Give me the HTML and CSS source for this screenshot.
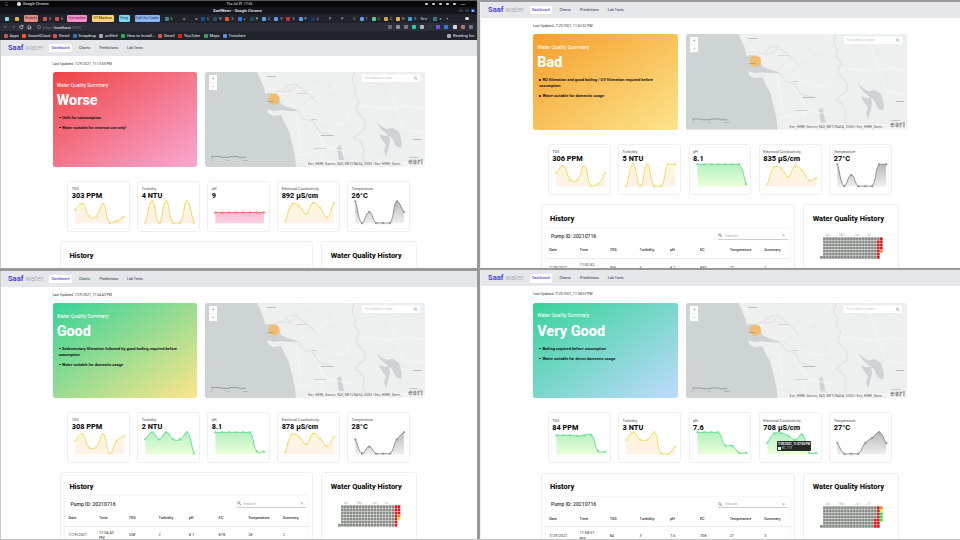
FILE: index.html
```
<!DOCTYPE html>
<html lang="en">
<head>
<meta charset="utf-8">
<title>Saaf water</title>
<link rel="stylesheet" href="styles.css">
</head>
<body>
<main class="wall">
  <section class="pane left first">
    <div class="chrome">
      <div class="sysbar"><span class="grid-dots">⠿</span><i class="dot white"></i><span class="app-name">Google Chrome</span><span class="clock">Thu Jul 29 &nbsp;17:55</span><span class="tray"><i></i><i></i><i></i><i></i><i></i><b>100%</b></span></div>
      <div class="titlebar"><span>SaafWater - Google Chrome</span><div class="winbtns"><i></i><i></i><i class="close">×</i></div></div>
      <div class="tabs" id="tabs"></div>
      <div class="toolbar">
        <svg class="nav-icons" viewBox="0 0 36 8"><g fill="none" stroke="#666b76" stroke-width=".6"><path d="M7.500 4H4M5.500 2.500 4 4l1.500 1.500M11.500 4H15M13.500 2.500 15 4l-1.500 1.500"/><path stroke="#d5d7dc" stroke-width=".8" d="M22.700 3A1.600 1.600 0 1 0 23 4.300M23 2v1.300h-1.300M27.300 4.200l2-1.900 2 1.900M28 3.800v2h2.600v-2"/></g></svg>
        <span class="url"><i></i>http://<b>localhost</b>:3000</span>
        <span class="tools" id="tools"></span>
      </div>
      <div class="bookmarks" id="bookmarks"></div>
    </div>
    <div class="app" data-panel="worse"></div>
  </section>
  <section class="pane right top"><div class="app" data-panel="bad"></div></section>
  <section class="pane left second"><div class="app" data-panel="good"></div></section>
  <section class="pane right"><div class="app" data-panel="great"></div></section>
</main>
<script src="app.js"></script>
</body>
</html>
```
FILE: styles.css
```
* { box-sizing: border-box; }
body { margin: 0; width: 960px; height: 540px; overflow: hidden; background: #999; font-family: Roboto, "Liberation Sans", sans-serif; font-size: 3.6px; color: #111; }
i { font-style: normal; }
svg { display: block; }
.wall { display: grid; grid-template-columns: 476.6px 480px; grid-template-rows: 267.7px 268.6px; column-gap: 3.4px; row-gap: 2.7px; height: 539px; background: #999; box-shadow: 0 1px #c6c6c6; }
.pane { overflow: hidden; background: #fff; min-width: 0; }
.left { border-left: 1px solid #c9c9cb; }
.left.first { border-left: 0; }
.left.first .app { border-left: 1px solid #c9c9cb; }
.second { margin-top: .6px; }
.right { border-left: 1px solid #eeeef0; }
.right.top { margin-top: 2px; }
.right .app { zoom: 1.0055; }

.chrome { height: 40px; background: #20222c; color: #c8cbd2; }
.sysbar { height: 7px; background: #08080a; display: flex; align-items: center; font-size: 3.7px; font-weight: 500; border-top: 1px solid #555; }
.grid-dots { margin-left: 4.5px; width: 12.5px; font-size: 4px; }
.dot { width: 3.6px; height: 3.6px; border-radius: 50%; flex: none; }
.dot.white { background: #ddd; }
.app-name { margin-left: 2.5px; width: 203.5px; }
.clock { width: 198px; font-size: 3.3px; white-space: nowrap; }
.tray { display: flex; align-items: center; gap: 4px; }
.tray i { width: 3px; height: 2.5px; background: #d5d5d5; border-radius: 1px; }
.tray b { font-size: 2.5px; font-weight: 400; }
.titlebar { height: 7px; background: #15161d; display: flex; align-items: center; font-size: 3.9px; font-weight: 700; color: #dadce0; }
.titlebar > span { margin-left: 213px; width: 246px; white-space: nowrap; }
.winbtns { display: flex; gap: 2.4px; }
.winbtns i { width: 3.6px; height: 3.6px; border-radius: 50%; background: #343743; }
.winbtns .close { color: #fff; background: #1668e8; font-size: 4px; line-height: 3.6px; text-align: center; }
.tabs { height: 9px; padding-left: 5px; display: flex; align-items: center; background: #20222c; }
.tab { flex: none; display: flex; align-items: center; gap: 2px; font-size: 3.4px; white-space: nowrap; overflow: hidden; }
.tab .fav { width: 4px; height: 4px; border-radius: 1px; flex: none; }
.group { flex: none; height: 6.4px; border-radius: 1.2px; margin-right: 5px; color: #33333c; font-size: 4px; line-height: 6.2px; text-align: center; white-space: nowrap; }
.toolbar { height: 8px; background: #2b2d38; display: flex; align-items: center; font-size: 4.1px; }
.nav-icons { width: 36px; height: 8px; }
.url { width: 110px; color: #737781; display: flex; align-items: center; white-space: nowrap; }
.url b { color: #d3d5da; font-weight: 500; }
.url i { width: 3.6px; height: 3.6px; border: .5px solid #747984; border-radius: 50%; margin: 0 2px 0 1.3px; }
.tools { display: flex; align-items: center; gap: 4.15px; }
.toolbar .tools { margin-left: 241.5px; }
.tools i { width: 4px; height: 4px; border-radius: 1px; flex: none; }
.bookmarks { height: 9px; background: #20222c; display: flex; align-items: center; padding-left: 3.5px; font-size: 4.1px; font-weight: 500; }
.bm { display: flex; flex: none; align-items: center; gap: 2px; white-space: nowrap; }
.bm i { width: 4px; height: 4px; border-radius: 1px; flex: none; }

.topnav { height: 16px; background: #e5e7eb; display: flex; align-items: center; padding-left: 7px; }
.right .topnav { margin-left: -1px; padding-left: 8px; }
.logo { width: 41.3px; font-size: 7.5px; line-height: 8px; color: #9a9ca4; font-weight: 300; white-space: nowrap; }
.logo b { color: #4a43dc; font-weight: 700; }
.topnav a { font-size: 3.7px; font-weight: 500; color: #535b68; white-space: nowrap; }
.topnav .on { width: 22.6px; height: 8.6px; border-radius: 1px; background: #fff; color: #5b54e6; text-align: center; line-height: 8.6px; margin-right: 7.2px; margin-top: -.2px; }
.topnav .n1 { width: 20.4px; }
.topnav .n2 { width: 27.5px; }
.content { padding-left: 51.5px; width: 423.5px; }
.right .content { padding-left: 51.7px; width: 423.7px; }
.updated { height: 16px; padding-top: 5.9px; font-size: 3.45px; line-height: 4.5px; color: #333; white-space: nowrap; }
.hero { display: flex; gap: 8px; height: 95px; }
.summary { width: 144px; height: 95px; border-radius: 2.5px; padding: 9.6px 4.2px; color: #fff; }
.summary.worse { background: linear-gradient(to bottom right, #ef4444, #f9a8d4); }
.summary.bad { background: linear-gradient(to bottom right, #f59e2b, #fde58c); }
.summary.good { background: linear-gradient(to bottom right, #36d399, #fde68a); }
.summary.great { background: linear-gradient(to bottom right, #36d399, #bfdbfe); }
.summary p { margin: 0; font-size: 4.95px; line-height: 6px; }
.summary h1 { margin: 5.3px 0 6px; font-size: 14.4px; line-height: 16px; height: 16px; font-weight: 800; }
.summary ul { margin: 0 0 0 2px; padding: 0; list-style: none; width: 126px; color: #151515; font-weight: 700; font-size: 3.98px; line-height: 6px; }
.summary li { margin-bottom: 4px; }
.summary li i { display: inline-block; width: 1.6px; height: 1.6px; margin: 0 1.4px .5px .3px; border-radius: 50%; background: #151515; }
.map { width: 220px; height: 95px; border-radius: 2.5px; overflow: hidden; }
.map text { font-family: Roboto, sans-serif; }
.stats { display: flex; justify-content: center; gap: 7.7px; margin-top: 14.2px; }
.stat { position: relative; flex: none; width: 62.3px; height: 50.5px; border: 1px solid #f0f0f2; border-radius: 2.5px; padding: 4.2px 0 0 3.3px; white-space: nowrap; }
.stat span { display: block; font-size: 3.8px; line-height: 5px; color: #4a5361; }
.stat strong { display: block; font-size: 7.35px; line-height: 9px; height: 7.8px; font-weight: 800; color: #0c0c0c; }
.stat svg { width: 62.3px; height: 26px; margin-left: -4.3px; }
.tip { position: absolute; left: 16.5px; top: 27.3px; width: 34.3px; height: 10.5px; border-radius: 1px; background: #262a26; color: #fff; padding: 1.3px; font-size: 2.9px; line-height: 4px; }
.tip b { display: block; }
.tip em { display: flex; align-items: center; gap: 1px; font-style: normal; color: #ddd; }
.tip em i { width: 3px; height: 3px; background: #d9ffe6; }
.lower { display: flex; justify-content: center; gap: 8px; margin-top: 9.7px; }
.history, .quality { height: 90px; border: 1px solid #f0f0f2; border-radius: 2.5px; flex: none; }
.history { width: 252.7px; padding: 8.4px 3px 0; }
.quality { width: 95.5px; padding: 8.4px 0 0 8.7px; }
h2 { margin: 0; font-size: 7.4px; line-height: 9px; font-weight: 800; color: #0c0c0c; white-space: nowrap; }
.history h2 { margin-left: 5px; }
.quality h2 { font-size: 7.4px; }
.table { margin-top: 4.3px; border: 1px solid #f7f7f8; height: 60px; }
.bar { height: 15.4px; padding: 0 2px 0 5px; display: flex; justify-content: space-between; align-items: center; font-size: 5.1px; font-weight: 500; color: #333; }
.search { width: 69.5px; height: 8px; border-bottom: 1px solid #cfcfcf; display: flex; align-items: center; gap: 2.5px; color: #aaa; font-size: 4px; font-weight: 400; }
.search svg { width: 4.5px; height: 4.5px; }
.search .x { margin-left: auto; margin-right: 3px; font-size: 5px; }
.row { display: grid; grid-template-columns: 30.3px 29.9px 29.8px 30.2px 29.8px 29.6px 34.5px 28px; padding-left: 3.2px; align-items: center; height: 14.5px; font-size: 3.85px; line-height: 5px; color: #333; }
.row.head { font-weight: 500; border-bottom: 1px solid #ececee; font-size: 3.75px; height: 15.3px; }
.row.data { height: 16px; }
.time { width: 18px; }
.quality svg { width: 72px; height: 30px; margin-top: 10.3px; }
```
FILE: app.js
```
const palettes = {
  y: ['#ecd65a', '#fff8d9', '#fff1e8'],
  g: ['#5bd98b', '#b5f0c3', '#eaffd9'],
  r: ['#ff5b66', '#fda4bd', '#fbd0e3'],
  k: ['#858585', '#b9b9b9', '#eeeeee']
};
const names = ['TDS', 'Turbidity', 'pH', 'Electrical Conductivity', 'Temperature'];
const panels = {
  worse: {
    updated: '7/29/2021, 11:13:55 PM', title: 'Worse', notes: ['Unfit for consumption', 'Water suitable for external use only!'],
    values: ['303 PPM', '4 NTU', '9', '892 µS/cm', '26°C'], colors: 'yyryk',
    series: [[29,22.7,35.3,35.7,22.7,42,40,35.7],[42,20.3,42,20.3,42,42,20.3,42],[31.5,31.5,31.5,31.5,31.5,31.5,31.5,31.5],[40.7,23,25,32.7,22,26.7,36.3,22],[20.3,42,31,42,42,42,20.3,31]]
  },
  bad: {
    updated: '7/29/2021, 11:52:52 PM', title: 'Bad', notes: ['RO filteration and good boiling / UV filteration required before cosumption', 'Water suitable for domestic usage'],
    values: ['306 PPM', '5 NTU', '8.1', '835 µS/cm', '27°C'], colors: 'yygyk',
    series: [[28.7,22,35.7,36,22,42,39.7,28.7],[42,20.3,42,20.3,42,42,20.3,20.3],[20.3,20.3,20.3,20.3,20.3,20.3,20.3,40],[40.3,23,24.7,32.7,22,26.7,36.3,34.3],[20.3,42,31,42,42,42,20.3,20.3]],
    row: ['7/29/2021', '11:52:52 PM', '306', '5', '8.1', '835', '27', '1'],
    heat: { 19: 'grrrrrr', 20: 'rrrro  ' }
  },
  good: {
    updated: '7/29/2021, 11:54:43 PM', title: 'Good', notes: ['Sedementary filteration followed by good boiling required before cosumption', 'Water suitable for domestic usage'],
    values: ['308 PPM', '2 NTU', '8.1', '878 µS/cm', '28°C'], colors: 'yggyk',
    series: [[28.7,22.3,35.3,35.3,22.3,41.5,28.7,24.3],[27.3,20.3,27.3,20.3,27.3,27.3,20.3,41.5],[20.3,20.3,20.3,20.3,20.3,20.3,39.5,39.7],[40,22.3,24.7,32.3,21.7,26.7,34.3,24.7],[27.5,41.5,34.7,41.7,41.7,41.7,27.3,20.3]],
    row: ['7/29/2021', '11:54:43 PM', '308', '2', '8.1', '878', '28', '2'],
    heat: { 19: 'rrrrrrr', 20: 'rrroy  ' }
  },
  great: {
    updated: '7/29/2021, 11:58:57 PM', title: 'Very Good', notes: ['Boiling required before cosumption', 'Water suitable for direct domestic usage'],
    values: ['84 PPM', '3 NTU', '7.6', '708 µS/cm', '27°C'], colors: 'gyggk', tip: true,
    series: [[23.3,23.3,23.3,24,23.3,23,39,39.7],[27.7,20.3,27.7,27.7,20.3,41.7,41.7,34.7],[20.3,20.3,20.3,20.3,33.3,33.7,40.7,40.7],[30.7,21.3,21.3,23.7,28,22.3,41,41],[31,41.7,41.7,41.7,31,25.7,20.3,31]],
    row: ['7/29/2021', '11:58:57 PM', '84', '3', '7.6', '708', '27', '3'],
    heat: { 18: 'ggggrrr', 19: 'rrrrrrr', 20: 'oyGGG  ' }
  }
};

// Cardinal spline through the points, control points kept inside the plot area.
function chart(ys, color, id) {
  const [line, top, bottom] = palettes[color];
  const pts = ys.map((y, i) => [8.3 + i * 6.94, y]);
  const clamp = v => Math.max(20.3, Math.min(42, v));
  const ctl = pts.map((p, i) => {
    const a = pts[i - 1] || p, b = pts[i + 1] || p;
    const d1 = Math.hypot(p[0] - a[0], p[1] - a[1]), d2 = Math.hypot(b[0] - p[0], b[1] - p[1]);
    const f1 = .5 * d1 / (d1 + d2), f2 = .5 * d2 / (d1 + d2);
    return [[p[0] - f1 * (b[0] - a[0]), clamp(p[1] - f1 * (b[1] - a[1]))], [p[0] + f2 * (b[0] - a[0]), clamp(p[1] + f2 * (b[1] - a[1]))]];
  });
  let d = `M${pts[0]}`;
  for (let i = 1; i < 8; i++) d += `C${ctl[i - 1][1]} ${ctl[i][0]} ${pts[i]}`;
  return `<svg viewBox="0 18 62.3 26"><defs><linearGradient id="${id}" x1="0" y1="20" x2="0" y2="42" gradientUnits="userSpaceOnUse"><stop stop-color="${top}"/><stop offset="1" stop-color="${bottom}"/></linearGradient></defs>
    <path d="${d}V42.300H8.300Z" fill="url(#${id})"/><path d="${d}" fill="none" stroke="${line}" stroke-width=".9"/>
    ${pts.map(p => `<circle cx="${p[0]}" cy="${p[1]}" r=".85" fill="${top}" stroke="${line}" stroke-width=".65"/>`).join('')}</svg>`;
}

const map = `<svg class="map" viewBox="0 0 220 95">
  <rect width="220" height="95" fill="#eeefef"/>
  <path fill="#ced3d4" d="M0 0H52.700L55 6 57 11 59 16 60 22 64 21 71 22 74 27 76 32 82 35 93 38 92 39 84 39 76 38 69 39 62 37 63 41 68 44 76 43 80 52 84 59 87 71 90 84 91 95H0Z"/>
  <path fill="#ced3d4" d="M171 50 176 54 181 57 188 56 194 60 197 70 196 76 191 74 187 66 182 62 176 57ZM174 62 180 64 184 63 185 70 183 78 181 85 179 79 181 73 177 68ZM132 75 136 73 137 80 139 88 134 88Z"/>
  <g fill="none" stroke="#f8f8f8" stroke-width=".8"><path d="M52 1 62 9 70 18 80 26 89 35 101 46 113 60 118 71 116 95M93 37 104 31 116 24 133 12 146 0M104 39 116 48 130 52 143 50 144 42 150 37 160 34 184 37 202 34 220 37M180 0 188 25 195 45 198 57 213 60 220 58M91 42 94 60 96 78M118 71 128 77 147 81M90 84 108 80 125 76"/></g>
  <g fill="none" stroke="#d6d9da" stroke-width=".7"><path d="M71 20 77 19 84 13 91 12 98 18 107 25 111 31M78 20 86 19 92 13M93 38 99 47 109 50 113 59 126 63M149 0 147 10 151 16 149 22 154 29 151 38 155 43 160 49 160 57 153 62 149 66 155 69 159 76 158 85 162 94"/></g>
  <g fill="none" stroke="#e6e8e8" stroke-width=".5"><path d="M94 0 102 8 116 10 128 17M103 39 118 30 131 21 147 20M164 94 174 80 191 85 202 94M163 10 180 13 202 8 218 16"/></g>
  <circle cx="69" cy="27" r="5.700" fill="#f7ba67" fill-opacity=".92"/>
  <g fill="#777" font-size="2.500"><text x="62" y="5">Mapusa</text><text x="62" y="30">Panaji</text><text x="116" y="64">Sanvordem</text><text x="208.500" y="67.500">Dandeli</text><g fill="#b0b0b0"><text x="106" y="47.500">GOA</text><text x="92" y="22">Bicholim</text><text x="109" y="77">SANGUEM</text></g></g>
  <rect x="4" y="3" width="8" height="15" fill="#fff"/><path d="M4 10.500h8" stroke="#e6e6e6" stroke-width=".5"/><path d="M7 6.500h2.400M8.200 5.300v2.400M7 14.500h2.400" stroke="#888" stroke-width=".45"/>
  <rect x="157" y="2.500" width="58" height="7.500" fill="#fff"/><text x="160" y="7.300" font-size="2.900" fill="#c6c6c6">Find address or place</text><circle cx="210.300" cy="5.800" r="1.100" fill="none" stroke="#777" stroke-width=".45"/><path d="m211.200 6.700 1.300 1.300" stroke="#777" stroke-width=".5"/>
  <path d="M7 86.500v-2h8.500v.8h9v-.8h8.500v.8H41" fill="none" stroke="#8b9091" stroke-width=".8"/><text x="6" y="88.600" font-size="2" fill="#888">0</text><text x="22" y="88.600" font-size="2" fill="#888">10</text><text x="38" y="88.600" font-size="2" fill="#888">20km</text>
  <rect x="102" y="89.500" width="118" height="5.500" fill="#f5f5f5" fill-opacity=".8"/><text x="103" y="93.300" font-size="3.180" fill="#555" textLength="94">Esri, HERE, Garmin, FAO, METI/NASA, USGS | Esri, HERE, Garm…</text>
  <text x="204" y="86.300" font-size="1.500" fill="#888">POWERED BY</text><text x="203.500" y="92.300" font-size="7" font-weight="500" fill="#fff" stroke="#858585" stroke-width=".5" textLength="14">esri</text>
</svg>`;

const shades = { g: '#868b85', r: '#dc1822', o: '#f58220', y: '#f5e52a', G: '#24e83c' };
function heat(special) {
  let out = '';
  for (let c = 0; c <= 20; c++) {
    const col = c === 0 ? '      g' : special[c] || 'ggggggg';
    [...col].forEach((k, r) => {
      if (k !== ' ') out += `<rect x="${(7.1 + c * 2.98).toFixed(2)}" y="${(4.3 + r * 3.1).toFixed(2)}" width="2.600" height="2.700" fill="${shades[k]}"/>`;
    });
  }
  const months = [['Apr', 13], ['May', 26], ['Jun', 41.5], ['Jul', 53.5]];
  return `<svg viewBox="0 0 72 30"><g font-size="2.700" fill="#b0b0b0">${months.map(m => `<text x="${m[1]}" y="3.300">${m[0]}</text>`).join('')}</g>${out}</svg>`;
}

document.querySelectorAll('[data-panel]').forEach(el => {
  const kind = el.dataset.panel, p = panels[kind];
  const head = ['Date', 'Time', 'TDS', 'Turbidity', 'pH', 'EC', 'Temperature', 'Summary'];
  const table = p.row ? `
        <div class="bar"><span>Pump ID: 20210716</span><div class="search"><svg viewBox="0 0 9 9"><circle cx="3.500" cy="3.500" r="2.300" fill="none" stroke="#555"/><path d="m5.200 5.200 3 3" stroke="#555" stroke-width="1.200"/></svg>Search<span class="x">×</span></div></div>
        <div class="row head">${head.map(h => `<span>${h}</span>`).join('')}</div>
        <div class="row data">${p.row.map((v, i) => `<span class="${i === 1 ? 'time' : ''}">${v}</span>`).join('')}</div>` : '';
  el.innerHTML = `
  <nav class="topnav"><div class="logo"><b>Saaf</b> water</div><a class="on">Dashboard</a><a class="n1">Charts</a><a class="n2">Predictions</a><a>Lab Tests</a></nav>
  <div class="content">
    <div class="updated">Last Updated: ${p.updated}</div>
    <div class="hero"><div class="summary ${kind}"><p>Water Quality Summary</p><h1>${p.title}</h1><ul>${p.notes.map(n => `<li><i></i>${n}</li>`).join('')}</ul></div>${map}</div>
    <div class="stats">${names.map((n, i) => `<div class="stat"><span>${n}</span><strong>${p.values[i]}</strong>${chart(p.series[i], p.colors[i], kind + i)}${p.tip && i === 3 ? '<div class="tip"><b>7/29/2021, 11:57:05 PM</b><em><i></i>EC: 713</em></div>' : ''}</div>`).join('')}</div>
    <div class="lower">
      <div class="history"><h2>History</h2><div class="table">${table}</div></div>
      <div class="quality"><h2>Water Quality History</h2>${p.heat ? heat(p.heat) : ''}</div>
    </div>
  </div>`;
});

const tab = (w, color, text) => `<span class="tab" style="width:${w}px"><i class="fav" style="background:${color}"></i>${text}</span>`;
const group = (w, color, text) => `<span class="group" style="width:${w}px;background:${color}">${text}</span>`;
const openTabs = [['#4c7f86','S'],['#20222c','w'],['#20222c','w'],['#1b4f91','C'],['#2d4e60','R'],['#e05240','S'],['#357edd','▸'],['#27475c','R'],['#5d9cf0','C'],['#5d9cf0','V'],['#c9302c','S'],['#5d9cf0','P'],['#15386b','C'],['#20222c','P'],['#20222c','P'],['#20222c','C'],['#5d9cf0','T'],['#53cf83','C'],['#d7a633','C'],['#f0b44a','H'],['#30a9e0','S']];
document.getElementById('tabs').innerHTML =
  tab(9.5, '#8fd3ee', '') + tab(9.5, '#e8b63a', '') + group(14, '#e98b84', 'Emails') + tab(12, '#d9534a', 'S') + tab(12, '#d9534a', 'Ir') +
  group(20, '#ff8bcb', 'the-codes') + group(21.5, '#fdd663', 'IIT-Madras') + group(11, '#78d9ec', 'Viraj') + group(25, '#8ab4f8', 'Call for Code') +
  openTabs.map(t => tab(12.2, t[0], t[1])).join('') +
  '<span class="tab" style="width:13px">New</span>' + tab(12, '#397d82', '×') + '<span class="tab" style="width:20px">&nbsp;+</span><i class="dot white"></i>';
document.getElementById('tools').innerHTML = ['#656974', '#8c9099', '#747985', '#20d3a0', '#b3b6bb', '#34363f', '#6b55e8', '#2f80d8', '#d8d8d8', '#a97872', '#777b84'].map(c => `<i style="background:${c}"></i>`).join('');
document.getElementById('bookmarks').innerHTML = [[18.5,'#c1574c','Apps'],[31,'#ff5a1f','SoundCloud'],[19.5,'#d9534a','Gmail'],[26.5,'#3b6db5','Snapdrop'],[22,'#a4a7ae','unfiled'],[37,'#22b04b','How to Install…'],[20,'#d9534a','Gmail'],[25.5,'#e62117','YouTube'],[19,'#3da05a','Maps'],[224.5,'#5c8fe6','Translate'],[27,'#a4a7ae','Reading list']].map(b => `<span class="bm" style="width:${b[0]}px"><i style="background:${b[1]}"></i>${b[2]}</span>`).join('');
```
